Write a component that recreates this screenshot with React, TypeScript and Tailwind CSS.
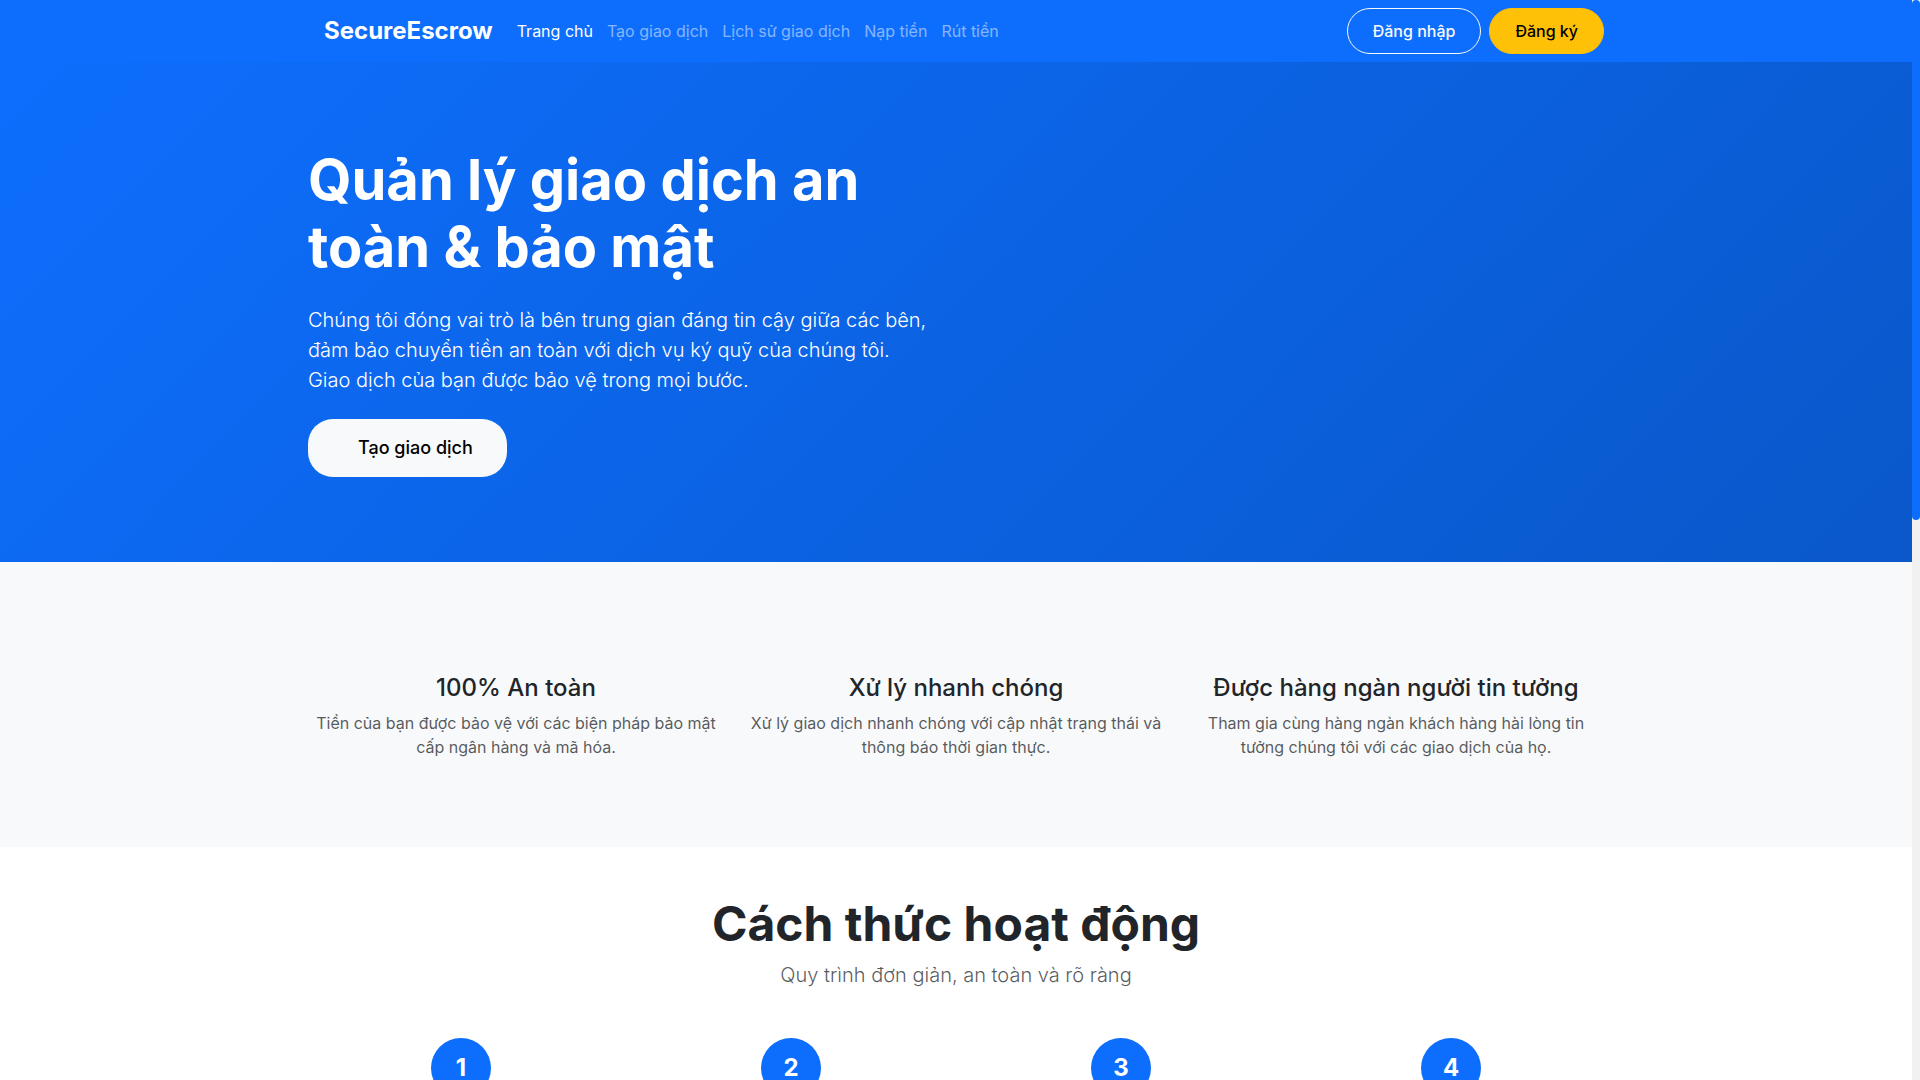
const navLinks = ["Tạo giao dịch", "Lịch sử giao dịch", "Nạp tiền", "Rút tiền"];

const features = [
  {
    title: "100% An toàn",
    text: "Tiền của bạn được bảo vệ với các biện pháp bảo mật cấp ngân hàng và mã hóa.",
  },
  {
    title: "Xử lý nhanh chóng",
    text: "Xử lý giao dịch nhanh chóng với cập nhật trạng thái và thông báo thời gian thực.",
  },
  {
    title: "Được hàng ngàn người tin tưởng",
    text: "Tham gia cùng hàng ngàn khách hàng hài lòng tin tưởng chúng tôi với các giao dịch của họ.",
  },
];

const steps = ["1", "2", "3", "4"];

function Navbar() {
  return (
    <header className="sticky top-0 z-10 bg-[#0d6efd]">
      <nav className="mx-auto flex max-w-[1320px] items-center px-3 py-2">
        <a href="#" className="mr-6 ml-4 text-2xl leading-9 font-bold text-white">
          SecureEscrow
        </a>
        <ul className="flex flex-1 gap-[14px] text-base">
          <li>
            <a href="#" aria-current="page" className="text-white">
              Trang chủ
            </a>
          </li>
          {navLinks.map((label) => (
            <li key={label}>
              <a href="#" className="text-white/50">
                {label}
              </a>
            </li>
          ))}
        </ul>
        <div className="flex gap-2 font-medium">
          <button
            type="button"
            className="rounded-[25px] border border-[#f8f9fa] px-[25px] py-2.5 text-[#f8f9fa]"
          >
            Đăng nhập
          </button>
          <button
            type="button"
            className="rounded-[25px] border border-[#ffc107] bg-[#ffc107] px-[25px] py-2.5 text-black"
          >
            Đăng ký
          </button>
        </div>
      </nav>
    </header>
  );
}

function Hero() {
  return (
    <section className="flex min-h-[500px] items-center bg-linear-[135deg,#0d6efd_0%,#0a58ca_100%] text-white">
      <div className="mx-auto w-full max-w-[1320px] px-3">
        <div className="max-w-[624px]">
          <h1 className="mb-6 text-[56px] leading-[67px] font-bold">
            Quản lý giao dịch an toàn &amp; bảo mật
          </h1>
          <p className="mb-6 text-xl leading-[30px] font-light">
            Chúng tôi đóng vai trò là bên trung gian đáng tin cậy giữa các bên, đảm bảo chuyển tiền
            an toàn với dịch vụ ký quỹ của chúng tôi. Giao dịch của bạn được bảo vệ trong mọi bước.
          </p>
          <a
            href="#"
            className="inline-block rounded-[25px] bg-[#f8f9fa] py-[14px] pr-[34px] pl-[50px] text-lg leading-[30px] font-medium text-black"
          >
            Tạo giao dịch
          </a>
        </div>
      </div>
    </section>
  );
}

function Features() {
  return (
    <section className="bg-[#f8f9fa] pt-[111px] pb-[88px]">
      <div className="mx-auto grid max-w-[1320px] grid-cols-3 text-center">
        {features.map((feature) => (
          <article key={feature.title} className="px-3">
            <h2 className="mb-2 text-2xl leading-[30px] font-medium">{feature.title}</h2>
            <p className="text-base text-[#212529]/75">{feature.text}</p>
          </article>
        ))}
      </div>
    </section>
  );
}

function HowItWorks() {
  return (
    <section className="bg-white py-12">
      <div className="mx-auto max-w-[1320px] text-center">
        <h2 className="mb-2 text-5xl leading-[57px] font-bold">Cách thức hoạt động</h2>
        <p className="mb-12 text-xl leading-[30px] font-light text-[#212529]/75">
          Quy trình đơn giản, an toàn và rõ ràng
        </p>
        <ol className="grid grid-cols-4">
          {steps.map((step) => (
            <li key={step} className="flex justify-center">
              <span className="flex size-[60px] items-center justify-center rounded-full bg-[#0d6efd] text-2xl font-bold text-white">
                {step}
              </span>
            </li>
          ))}
        </ol>
      </div>
    </section>
  );
}

export default function App() {
  return (
    <div className="flex h-screen font-[Inter,'Liberation_Sans',sans-serif] text-[#212529]">
      <main className="min-w-0 flex-1 overflow-y-auto [scrollbar-width:none]">
        <Navbar />
        <Hero />
        <Features />
        <HowItWorks />
      </main>
      <div aria-hidden="true" className="w-2 bg-[#f1f1f1]">
        <div className="h-[48.15%] rounded bg-[#0d6efd]" />
      </div>
    </div>
  );
}
